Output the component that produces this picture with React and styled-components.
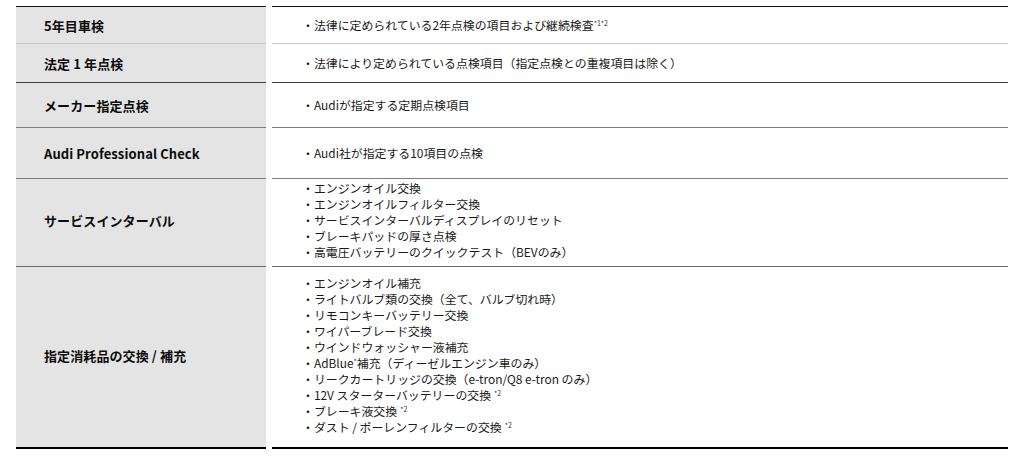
import React from "react";
import styled, { createGlobalStyle } from "styled-components";

const GlobalStyle = createGlobalStyle`
  html, body {
    margin: 0;
    padding: 0;
    background: #fff;
  }
  body {
    font-family: "Noto Sans CJK JP", "Noto Sans", sans-serif;
    color: #111;
  }
`;

const rows = [
  {
    head: "5年目車検",
    h: 36,
    line: "#c6c6c6",
    items: [["法律に定められている2年点検の項目および継続検査", "*1*2", false]],
  },
  {
    head: "法定 1 年点検",
    h: 38,
    line: "#3c3c3c",
    items: [["法律により定められている点検項目（指定点検との重複項目は除く）"]],
  },
  {
    head: "メーカー指定点検",
    h: 44,
    line: "#7c7c7c",
    items: [["Audiが指定する定期点検項目"]],
  },
  {
    head: "Audi Professional Check",
    h: 50,
    line: "#7c7c7c",
    items: [["Audi社が指定する10項目の点検"]],
  },
  {
    head: "サービスインターバル",
    h: 87,
    line: "#6c6c6c",
    items: [
      ["エンジンオイル交換"],
      ["エンジンオイルフィルター交換"],
      ["サービスインターバルディスプレイのリセット"],
      ["ブレーキパッドの厚さ点検"],
      ["高電圧バッテリーのクイックテスト（BEVのみ）"],
    ],
  },
  {
    head: "指定消耗品の交換 / 補充",
    h: 180,
    line: "#000",
    thick: true,
    items: [
      ["エンジンオイル補充"],
      ["ライトバルブ類の交換（全て、バルブ切れ時）"],
      ["リモコンキーバッテリー交換"],
      ["ワイパーブレード交換"],
      ["ウインドウォッシャー液補充"],
      ["AdBlue", "*", false, "補充（ディーゼルエンジン車のみ）"],
      ["リークカートリッジの交換（e-tron/Q8 e-tron のみ）"],
      ["12V スターターバッテリーの交換", "*2", true],
      ["ブレーキ液交換", "*2", true],
      ["ダスト / ポーレンフィルターの交換", "*2", true],
    ],
  },
];

const Page = styled.div`
  padding: 6px 16px 0 16px;
  width: 992px;
  box-sizing: border-box;
`;

const Table = styled.div`
  display: flex;
  flex-direction: column;
`;

const Row = styled.div`
  display: grid;
  grid-template-columns: 250px 736px;
  column-gap: 6px;
`;

const Cell = styled.div`
  box-sizing: border-box;
  height: ${(p) => p.$h + (p.$first ? 1 : 0) + (p.$thick ? 2 : 1)}px;
  border-top: ${(p) => (p.$first ? "1px solid #111" : "none")};
  border-bottom: ${(p) => (p.$thick ? 2 : 1)}px solid ${(p) => p.$line};
  display: flex;
  align-items: center;
`;

const Head = styled(Cell)`
  background: #e4e4e4;
  padding-left: 28px;
  padding-bottom: ${(p) => (p.$multi ? 4 : 0)}px;
  font-size: 13px;
  font-weight: 700;
  color: #0c0c0c;
  letter-spacing: 0.1px;
`;

const Body = styled(Cell)`
  padding-left: 30px;
  padding-bottom: ${(p) => (p.$multi ? 5 : 0)}px;
`;

const List = styled.ul`
  list-style: none;
  margin: 0;
  padding: 0;
  font-size: 11.9px;
  line-height: 16px;
  color: #1a1a1a;
`;

const Item = styled.li`
  white-space: nowrap;
  &::before {
    content: "・";
  }
`;

const Note = styled.sup`
  font-size: 7px;
  line-height: 0;
  vertical-align: 4px;
  margin-left: ${(p) => (p.$spaced ? "3px" : "0")};
  color: #333;
`;

export default function App() {
  return (
    <>
      <GlobalStyle />
      <Page>
        <Table>
          {rows.map((r, i) => {
            const multi = r.items.length > 1;
            return (
              <Row key={r.head}>
                <Head
                  $h={r.h}
                  $line={r.line}
                  $thick={r.thick}
                  $first={i === 0}
                  $multi={multi}
                >
                  {r.head}
                </Head>
                <Body
                  $h={r.h}
                  $line={r.line}
                  $thick={r.thick}
                  $first={i === 0}
                  $multi={multi}
                >
                  <List>
                    {r.items.map(([text, note, spaced, rest]) => (
                      <Item key={text + (rest || "")}>
                        {text}
                        {note && <Note $spaced={spaced}>{note}</Note>}
                        {rest}
                      </Item>
                    ))}
                  </List>
                </Body>
              </Row>
            );
          })}
        </Table>
      </Page>
    </>
  );
}
